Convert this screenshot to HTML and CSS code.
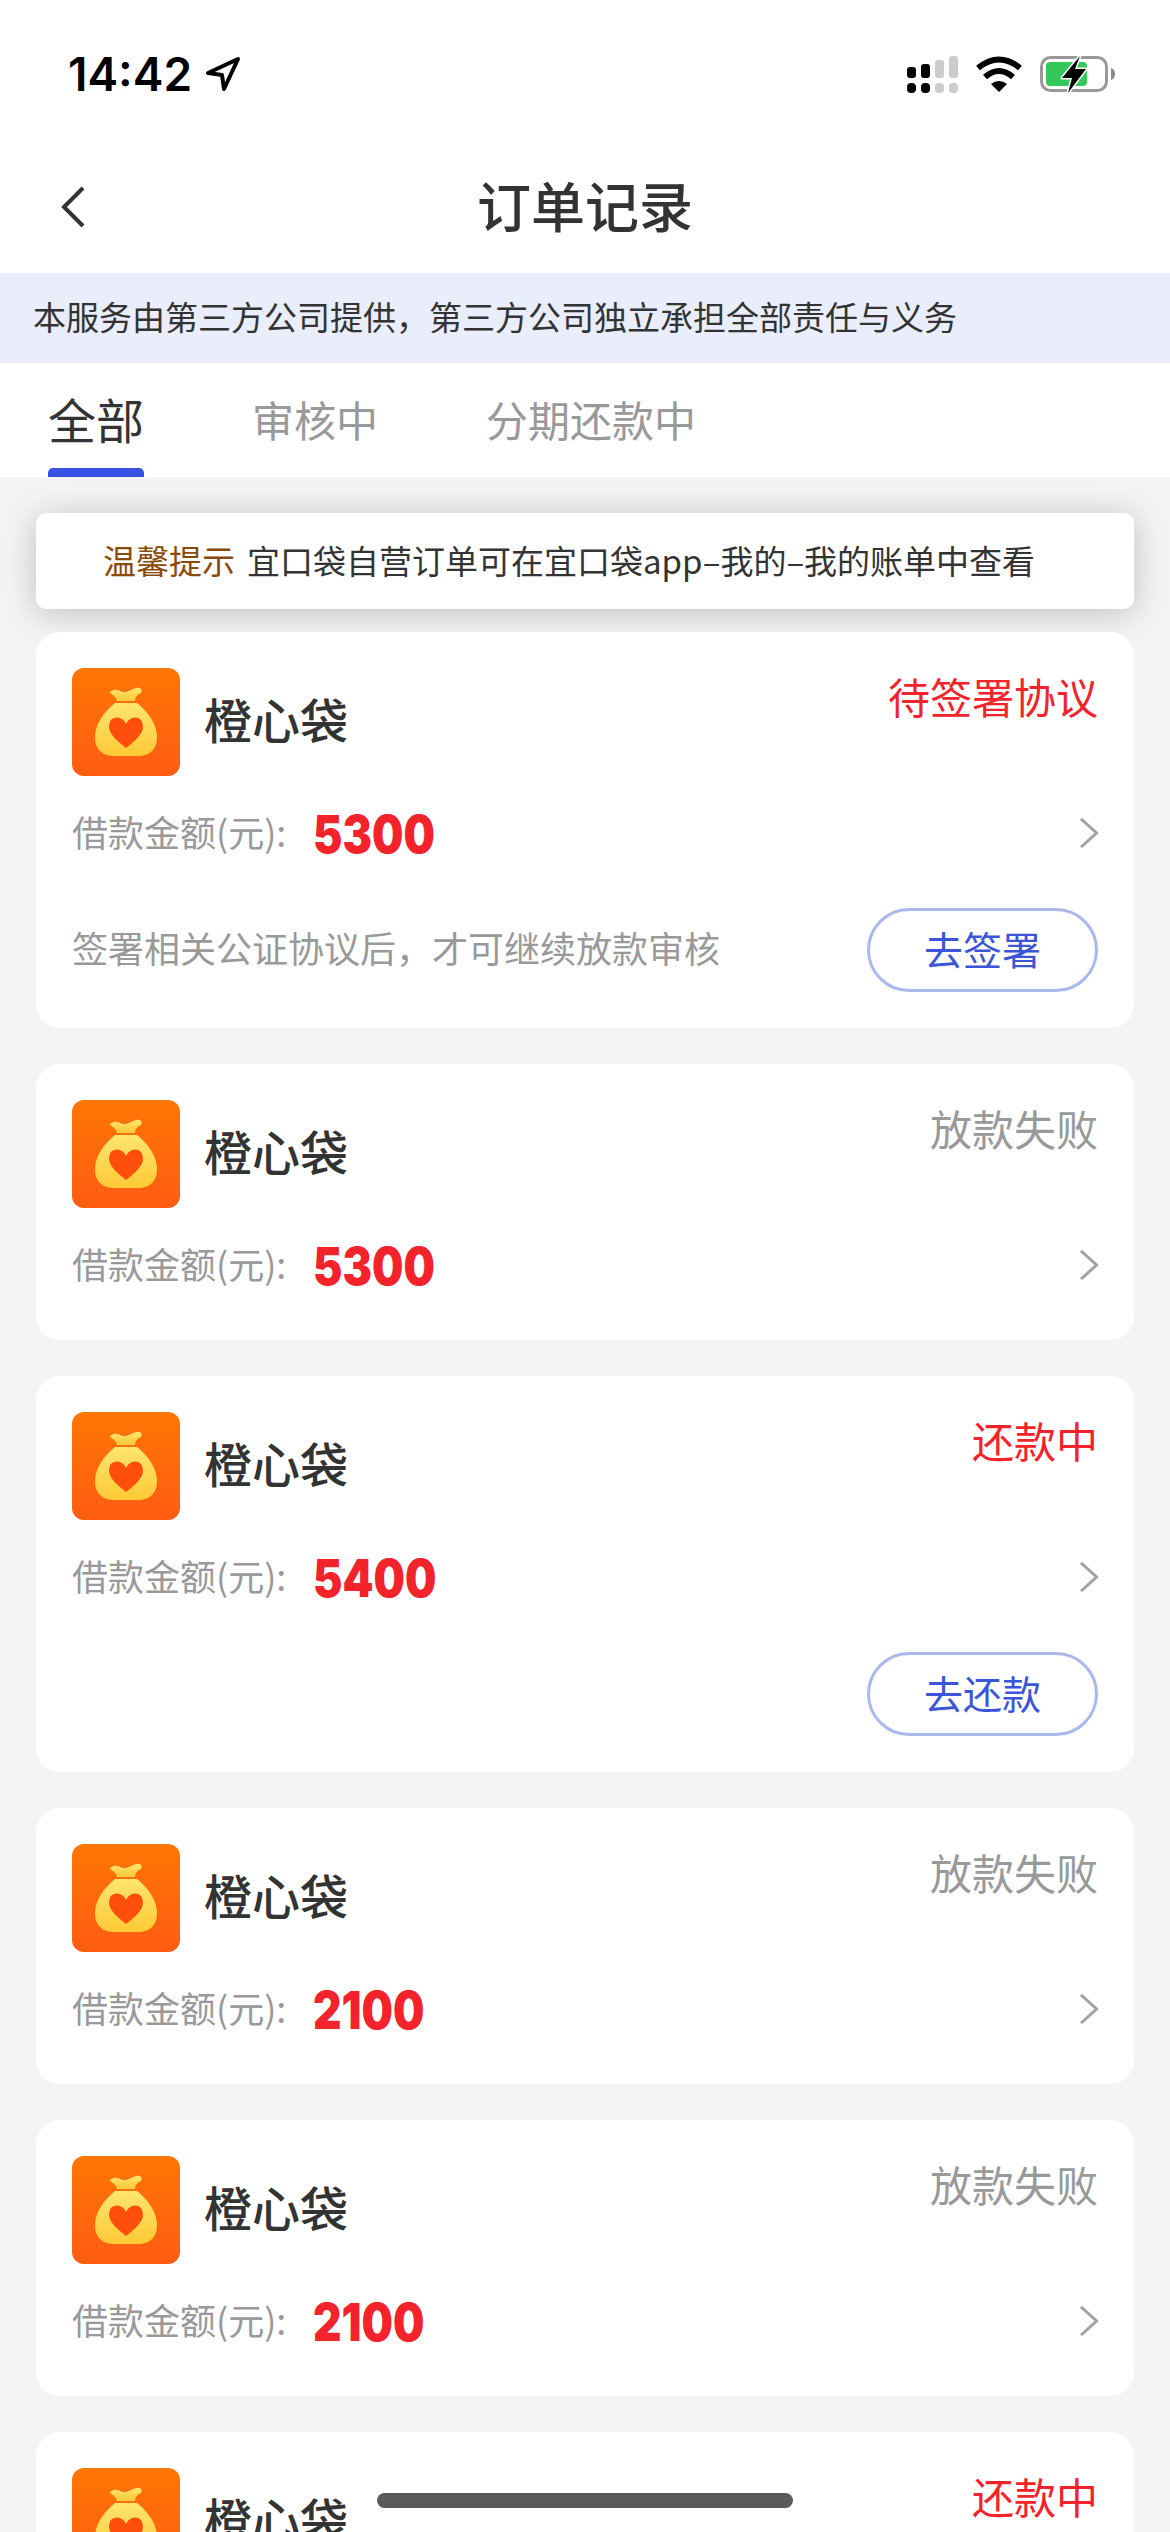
FILE: index.html
```html
<!DOCTYPE html>
<html lang="zh-CN">
<head>
<meta charset="utf-8">
<title>订单记录</title>
<link rel="stylesheet" href="styles.css">
</head>
<body>
<svg class="sprite" aria-hidden="true">
  <defs>
    <linearGradient id="bgGrad" x1="0" y1="0" x2="0" y2="1"><stop offset="0" stop-color="#ff7604"/><stop offset="1" stop-color="#ff5c12"/></linearGradient>
    <linearGradient id="bagGrad" x1="0" y1="0" x2="0" y2="1"><stop offset="0" stop-color="#ffe570"/><stop offset="1" stop-color="#ffca35"/></linearGradient>
    <symbol id="logo" viewBox="0 0 108 108">
      <rect width="108" height="108" rx="12" fill="url(#bgGrad)"/>
      <path fill="url(#bagGrad)" d="M38 24C42 20 47 22 51 24C55 25 59 21 64 20C69 19 71 22 69 25C65 27 63 29 63 33H45C44 29 41 27 38 25Z"/>
      <path fill="url(#bagGrad)" d="M43 35H65C76 44 85 56 85 69C85 83 76 88 66 88H42C32 88 23 83 23 69C23 56 32 44 43 35Z"/>
      <path fill="#ff4f0a" d="M54 56C58 47 71 47 71 59C71 67 60 75 54 80C48 75 37 67 37 59C37 47 50 47 54 56Z"/>
    </symbol>
    <symbol id="chev" viewBox="0 0 18 30">
      <path d="M1 1L16.5 15L1 29" fill="none" stroke="#a3a3a3" stroke-width="3"/>
    </symbol>
  </defs>
</svg>

<div class="screen">
  <header class="top">
    <div class="status">
      <div class="status-left">
        <span class="time">14:42</span>
        <svg class="loc" viewBox="0 0 36 36"><path d="M33 3L3 17L17 19L19 33Z" fill="none" stroke="#000" stroke-width="4" stroke-linejoin="round"/></svg>
      </div>
      <div class="status-right">
        <div class="signal">
          <div class="sig-col sig-1"><i></i><b></b></div>
          <div class="sig-col sig-2"><i></i><b></b></div>
          <div class="sig-col sig-3 off"><i></i><b></b></div>
          <div class="sig-col sig-4 off"><i></i><b></b></div>
        </div>
        <svg class="wifi" viewBox="0 0 48 36">
          <path d="M3 12Q24 -5 45 12" fill="none" stroke="#000" stroke-width="6"/>
          <path d="M10 21Q24 9 38 21" fill="none" stroke="#000" stroke-width="6"/>
          <path d="M24 36L16 28Q24 22 32 28Z" fill="#000"/>
        </svg>
        <svg class="batt" viewBox="0 0 75 38">
          <rect x="1.5" y="2.5" width="65" height="33" rx="9" fill="none" stroke="#999" stroke-width="3"/>
          <rect x="6" y="7" width="41" height="24" rx="4" fill="#34c759"/>
          <path d="M71 13C74 14 75 16 75 19C75 22 74 24 71 25Z" fill="#888"/>
          <path d="M40 1L22 23H32L28 38L46 14H35Z" fill="#000" stroke="#fff" stroke-width="3" paint-order="stroke" stroke-linejoin="round"/>
        </svg>
      </div>
    </div>
    <nav class="nav">
      <svg class="back" viewBox="0 0 26 42"><path d="M23 2L4 21L23 40" fill="none" stroke="#333" stroke-width="4"/></svg>
      <h1 class="title">订单记录</h1>
    </nav>
  </header>

  <div class="banner">本服务由第三方公司提供，第三方公司独立承担全部责任与义务</div>

  <div class="tabs">
    <div class="tab active">全部</div>
    <div class="tab">审核中</div>
    <div class="tab">分期还款中</div>
  </div>

  <main class="list">
    <div class="tip"><span class="tip-label">温馨提示</span><span>宜口袋自营订单可在宜口袋app–我的–我的账单中查看</span></div>

    <article class="card">
      <div class="head">
        <svg class="logo"><use href="#logo"/></svg>
        <div class="name">橙心袋</div>
        <div class="state red">待签署协议</div>
      </div>
      <div class="amount">
        <span class="label">借款金额(元):</span><span class="num">5300</span>
        <svg class="chev"><use href="#chev"/></svg>
      </div>
      <div class="action">
        <span class="hint">签署相关公证协议后，才可继续放款审核</span>
        <span class="btn">去签署</span>
      </div>
    </article>

    <article class="card">
      <div class="head">
        <svg class="logo"><use href="#logo"/></svg>
        <div class="name">橙心袋</div>
        <div class="state">放款失败</div>
      </div>
      <div class="amount">
        <span class="label">借款金额(元):</span><span class="num">5300</span>
        <svg class="chev"><use href="#chev"/></svg>
      </div>
    </article>

    <article class="card">
      <div class="head">
        <svg class="logo"><use href="#logo"/></svg>
        <div class="name">橙心袋</div>
        <div class="state red">还款中</div>
      </div>
      <div class="amount">
        <span class="label">借款金额(元):</span><span class="num">5400</span>
        <svg class="chev"><use href="#chev"/></svg>
      </div>
      <div class="action">
        <span class="hint"></span>
        <span class="btn">去还款</span>
      </div>
    </article>

    <article class="card">
      <div class="head">
        <svg class="logo"><use href="#logo"/></svg>
        <div class="name">橙心袋</div>
        <div class="state">放款失败</div>
      </div>
      <div class="amount">
        <span class="label">借款金额(元):</span><span class="num">2100</span>
        <svg class="chev"><use href="#chev"/></svg>
      </div>
    </article>

    <article class="card">
      <div class="head">
        <svg class="logo"><use href="#logo"/></svg>
        <div class="name">橙心袋</div>
        <div class="state">放款失败</div>
      </div>
      <div class="amount">
        <span class="label">借款金额(元):</span><span class="num">2100</span>
        <svg class="chev"><use href="#chev"/></svg>
      </div>
    </article>

    <article class="card">
      <div class="head">
        <svg class="logo"><use href="#logo"/></svg>
        <div class="name">橙心袋</div>
        <div class="state red">还款中</div>
      </div>
    </article>
  </main>

  <div class="home-bar"></div>
</div>
</body>
</html>
```

FILE: styles.css
```css
* { box-sizing: border-box; }
html, body { margin: 0; padding: 0; background: #f4f4f4; }
body {
  font-family: "Noto Sans CJK SC", "Noto Sans", sans-serif;
  color: #333;
}
.sprite { display: block; width: 0; height: 0; overflow: hidden; }
.screen {
  position: relative;
  width: 1170px;
  height: 2532px;
  overflow: hidden;
  background: #f4f4f4;
}

/* top */
.top { background: #fff; height: 273px; }
.status {
  height: 148px;
  display: flex;
  align-items: center;
  justify-content: space-between;
  padding: 0 55px 0 68px;
}
.status-left { display: flex; align-items: center; gap: 13px; }
.time {
  font-family: Inter, Roboto, sans-serif;
  font-weight: 600;
  font-size: 46px;
  line-height: 50px;
  color: #000;
}
.loc { width: 36px; height: 36px; display: block; }
.status-right { display: flex; align-items: center; }
.signal { display: flex; gap: 5px; align-items: flex-end; height: 37px; margin-right: 17px; }
.sig-col { width: 9px; display: flex; flex-direction: column; align-items: stretch; gap: 5px; }
.sig-col i { display: block; background: #000; border-radius: 3px; }
.sig-col b { display: block; height: 10px; background: #000; border-radius: 4px; }
.sig-col.off i, .sig-col.off b { background: #ccc; }
.sig-1 i { height: 11px; }
.sig-2 i { height: 14px; }
.sig-3 i { height: 18px; }
.sig-4 i { height: 22px; }
.wifi { width: 48px; height: 36px; display: block; margin-right: 17px; }
.batt { width: 75px; height: 38px; display: block; }

.nav {
  position: relative;
  height: 125px;
  padding-bottom: 12px;
  display: flex;
  align-items: center;
  justify-content: center;
}
.back { position: absolute; left: 60px; top: 38px; width: 26px; height: 42px; }
.title { margin: 0; font-size: 54px; font-weight: 500; line-height: 70px; color: #333; }

/* banner */
.banner {
  height: 90px;
  background: #e9edfc;
  padding-left: 33px;
  font-size: 33px;
  line-height: 87px;
  color: #333;
}

/* tabs */
.tabs {
  height: 114px;
  background: #fff;
  display: flex;
  gap: 108px;
  padding-left: 48px;
}
.tab {
  position: relative;
  font-size: 42px;
  line-height: 111px;
  color: #999;
}
.tab.active { font-size: 48px; color: #333; }
.tab.active::after {
  content: "";
  position: absolute;
  left: 0;
  right: 0;
  bottom: 0;
  height: 9px;
  background: #3752e4;
  border-radius: 5px 5px 0 0;
}

/* list */
.list {
  padding: 36px 36px 0;
  display: flex;
  flex-direction: column;
  gap: 36px;
}
.tip {
  height: 96px;
  margin-bottom: -13px;
  padding-bottom: 3px;
  background: #fff;
  border-radius: 10px;
  box-shadow: 0 4px 34px rgba(0, 0, 0, 0.22);
  display: flex;
  align-items: center;
  gap: 12px;
  padding-left: 67px;
  font-size: 33px;
  color: #333;
  position: relative;
}
.tip-label { color: #8a4a0a; }

.card {
  background: #fff;
  border-radius: 24px;
  padding: 36px 36px 0;
  position: relative;
  flex: none;
}
.head { display: flex; align-items: center; height: 108px; }
.logo { width: 108px; height: 108px; display: block; flex: none; }
.name { margin-left: 24px; font-size: 48px; font-weight: 500; line-height: 60px; color: #333; position: relative; top: -4px; }
.state {
  margin-left: auto;
  align-self: flex-start;
  margin-top: 1px;
  font-size: 42px;
  line-height: 54px;
  color: #999;
}
.state.red { color: #f2232b; }

.amount {
  margin-top: 24px;
  margin-bottom: 42px;
  height: 66px;
  display: flex;
  align-items: center;
}
.label { width: 241px; font-size: 36px; color: #999; line-height: 50px; position: relative; top: -2px; }
.num {
  font-family: Inter, Roboto, sans-serif;
  font-weight: 900;
  font-size: 52px;
  line-height: 66px;
  color: #f2232b;
  display: inline-block;
  transform: scaleX(0.85);
  transform-origin: left center;
  position: relative;
  top: 2px;
}
.chev { width: 18px; height: 30px; margin-left: auto; display: block; }

.action {
  height: 84px;
  margin-bottom: 36px;
  display: flex;
  align-items: center;
  justify-content: space-between;
}
.hint { font-size: 36px; color: #999; position: relative; top: -3px; }
.btn {
  width: 231px;
  height: 84px;
  border: 3px solid #aab8ee;
  border-radius: 42px;
  display: flex;
  align-items: center;
  justify-content: center;
  font-size: 39px;
  padding-bottom: 5px;
  color: #3c55d8;
}

.home-bar {
  position: absolute;
  left: 377px;
  top: 2493px;
  width: 416px;
  height: 15px;
  border-radius: 8px;
  background: #5a5a5a;
}
```
